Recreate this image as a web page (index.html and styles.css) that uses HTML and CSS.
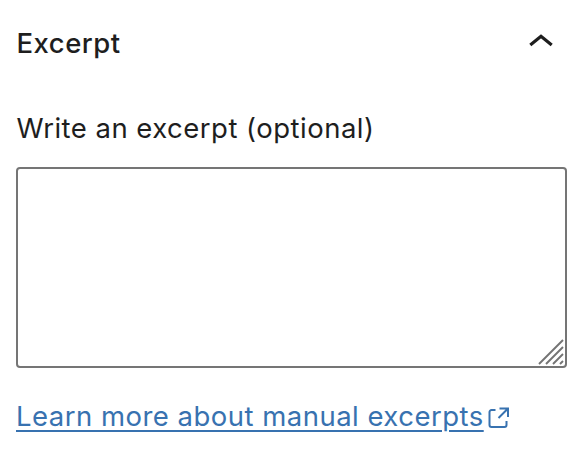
FILE: index.html
```html
<!DOCTYPE html>
<html lang="en">
<head>
<meta charset="utf-8">
<title>Excerpt</title>
<link rel="stylesheet" href="styles.css">
</head>
<body>
<section class="panel">
  <h2 class="panel-header">
    <span class="panel-title">Excerpt</span>
    <svg class="chevron" viewBox="0 0 24 13" aria-hidden="true"><path d="M1.300 10.900 12 2.200 22.700 10.900"/></svg>
  </h2>
  <label class="label" for="excerpt">Write an excerpt (optional)</label>
  <div class="field">
    <textarea class="textarea" id="excerpt"></textarea>
    <svg class="grip" viewBox="0 0 26 26" aria-hidden="true"><path d="M1 25 25 1M8 25 25 8M15 25 25 15M22 25 25 22"/></svg>
  </div>
  <a class="link" href="#"><span class="link-text">Learn more about manual excerpts</span><svg class="external" viewBox="0 0 22 22" aria-hidden="true"><path d="M7.500 3H3.500A2 2 0 0 0 1.500 5V18A2 2 0 0 0 3.500 20H16.500A2 2 0 0 0 18.500 18V14M11.500 1.500H20V10M20 1.500 10.500 11"/></svg></a>
</section>
</body>
</html>
```

FILE: styles.css
```css
body {
  margin: 0;
  background: #fff;
  color: #1e1e1e;
  font-family: Inter, sans-serif;
  font-size: 27.5px;
  letter-spacing: 0.48px;
}
.panel {
  display: flex;
  flex-direction: column;
  padding: 23px 15px 0 16px;
}
.panel-header {
  display: flex;
  justify-content: space-between;
  align-items: center;
  height: 40px;
  margin: 0 0 45px;
  font-size: inherit;
  font-weight: 500;
}
.panel-title {
  padding-left: 0.5px;
}
.chevron {
  width: 24px;
  height: 13px;
  margin: 0 14px 5px 0;
  fill: none;
  stroke: #1e1e1e;
  stroke-width: 3.2;
}
.label {
  height: 40px;
  margin-bottom: 19px;
  padding-left: 0.5px;
  line-height: 41px;
  white-space: nowrap;
}
.field {
  position: relative;
  height: 201px;
}
.textarea {
  display: block;
  box-sizing: border-box;
  width: 100%;
  height: 100%;
  border: 2px solid #757575;
  border-radius: 4px;
  resize: none;
  outline: none;
}
.grip {
  position: absolute;
  right: 3px;
  bottom: 3px;
  width: 26px;
  height: 26px;
  fill: none;
  stroke: #747474;
  stroke-width: 1.9;
}
.link {
  display: flex;
  align-items: center;
  height: 40px;
  margin-top: 28px;
  color: #3872b0;
  text-decoration: none;
  white-space: nowrap;
}
.link-text {
  text-decoration: underline;
  text-decoration-thickness: 2px;
  text-underline-offset: 4px;
}
.external {
  width: 22px;
  height: 22px;
  margin: 3px 0 0 4px;
  fill: none;
  stroke: currentColor;
  stroke-width: 2;
}
```
